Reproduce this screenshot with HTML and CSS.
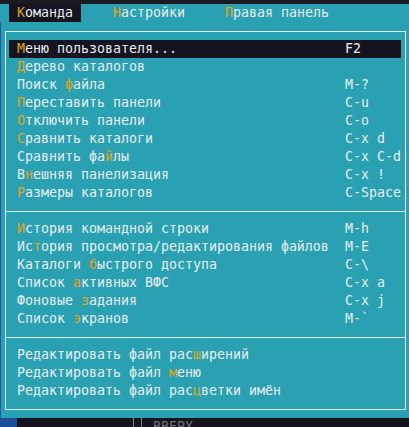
FILE: index.html
```html
<!DOCTYPE html>
<html lang="ru">
<head>
<meta charset="utf-8">
<title>Команда</title>
<link rel="stylesheet" href="styles.css">
</head>
<body>
<div class="term">
  <div class="top-strip"></div>
  <div class="menubar"><span class="mb-active"> <b class="hk">К</b>оманда </span><span class="mb-rest">    <b class="hk">Н</b>астройки     <b class="hk">П</b>равая панель</span></div>
  <div class="screen">
    <div class="panel-edge"></div>
    <div class="box">
      <div class="frame">
        <div class="group">
          <div class="item sel"><span class="label"><b class="hk">М</b>еню пользователя...</span><span class="key">F2</span></div>
          <div class="item"><span class="label"><b class="hk">Д</b>ерево каталогов</span><span class="key"></span></div>
          <div class="item"><span class="label">Поиск <b class="hk">ф</b>айла</span><span class="key">M-?</span></div>
          <div class="item"><span class="label"><b class="hk">П</b>ереставить панели</span><span class="key">C-u</span></div>
          <div class="item"><span class="label"><b class="hk">О</b>тключить панели</span><span class="key">C-o</span></div>
          <div class="item"><span class="label"><b class="hk">С</b>равнить каталоги</span><span class="key">C-x d</span></div>
          <div class="item"><span class="label">Сравнить фа<b class="hk">й</b>лы</span><span class="key">C-x C-d</span></div>
          <div class="item"><span class="label">В<b class="hk">н</b>ешняя панелизация</span><span class="key">C-x !</span></div>
          <div class="item"><span class="label"><b class="hk">Р</b>азмеры каталогов</span><span class="key">C-Space</span></div>
        </div>
        <div class="sep"></div>
        <div class="group">
          <div class="item"><span class="label"><b class="hk">И</b>стория командной строки</span><span class="key">M-h</span></div>
          <div class="item"><span class="label">Ис<b class="hk">т</b>ория просмотра/редактирования файлов</span><span class="key">M-E</span></div>
          <div class="item"><span class="label">Каталоги <b class="hk">б</b>ыстрого доступа</span><span class="key">C-\</span></div>
          <div class="item"><span class="label">Список <b class="hk">а</b>ктивных ВФС</span><span class="key">C-x a</span></div>
          <div class="item"><span class="label">Фоновые <b class="hk">з</b>адания</span><span class="key">C-x j</span></div>
          <div class="item"><span class="label">Список <b class="hk">э</b>кранов</span><span class="key">M-`</span></div>
        </div>
        <div class="sep"></div>
        <div class="group">
          <div class="item"><span class="label">Редактировать файл рас<b class="hk">ш</b>ирений</span><span class="key"></span></div>
          <div class="item"><span class="label">Редактировать файл <b class="hk">м</b>еню</span><span class="key"></span></div>
          <div class="item"><span class="label">Редактировать файл рас<b class="hk">ц</b>ветки имён</span><span class="key"></span></div>
        </div>
      </div>
    </div>
  </div>
  <div class="bottom-row">
    <div class="bottom-blue"></div>
    <div class="bottom-gap"></div>
    <div class="vline"></div>
    <div class="vgap"></div>
    <div class="vline"></div>
    <div class="tgap"></div>
    <span class="updir">ВВЕРХ</span>
  </div>
</div>
</body>
</html>
```

FILE: styles.css
```css
html, body {
  margin: 0;
  padding: 0;
  background: #16141f;
}

.term {
  width: 409px;
  height: 427px;
  overflow: hidden;
  font-family: "DejaVu Sans Mono", "Liberation Mono", monospace;
  font-size: 13.29px;
  line-height: 18px;
  color: #e6eef0;
  background: #16141f;
}

.hk {
  font-weight: normal;
  color: #e2a615;
}

.top-strip {
  height: 4px;
  background: #1b1a22;
}

.menubar {
  height: 18px;
  background: #2aa1b2;
  padding-left: 9px;
  white-space: pre;
  display: flex;
}

.mb-active {
  background: #16141f;
}

.screen {
  display: flex;
  height: 396px;
}

.panel-edge {
  width: 1px;
  background: #1f59a3;
}

.box {
  width: 408px;
  height: 396px;
  box-sizing: border-box;
  background: #2aa1b2;
  padding: 9px 3px 8px 4px;
}

.frame {
  border: 1px solid #e6eef0;
  padding: 8px 0 9px 0;
}

.group {
  padding: 0 4px 0 3px;
}

.item {
  display: grid;
  grid-template-columns: 328px 1fr;
  height: 18px;
  padding-left: 8px;
  white-space: pre;
}

.item.sel {
  background: #16141f;
}

.sep {
  height: 1px;
  background: #e6eef0;
  margin: 9px 0 8px;
}

.bottom-row {
  display: flex;
  height: 18px;
  background: #16141f;
}

.bottom-blue {
  width: 17px;
  background: #1d4f99;
}

.bottom-gap {
  width: 116px;
}

.vline {
  width: 1px;
  background: #7d7d88;
}

.vgap {
  width: 7px;
}

.tgap {
  width: 11px;
}

.updir {
  color: #6f6f7a;
  white-space: pre;
}
```
